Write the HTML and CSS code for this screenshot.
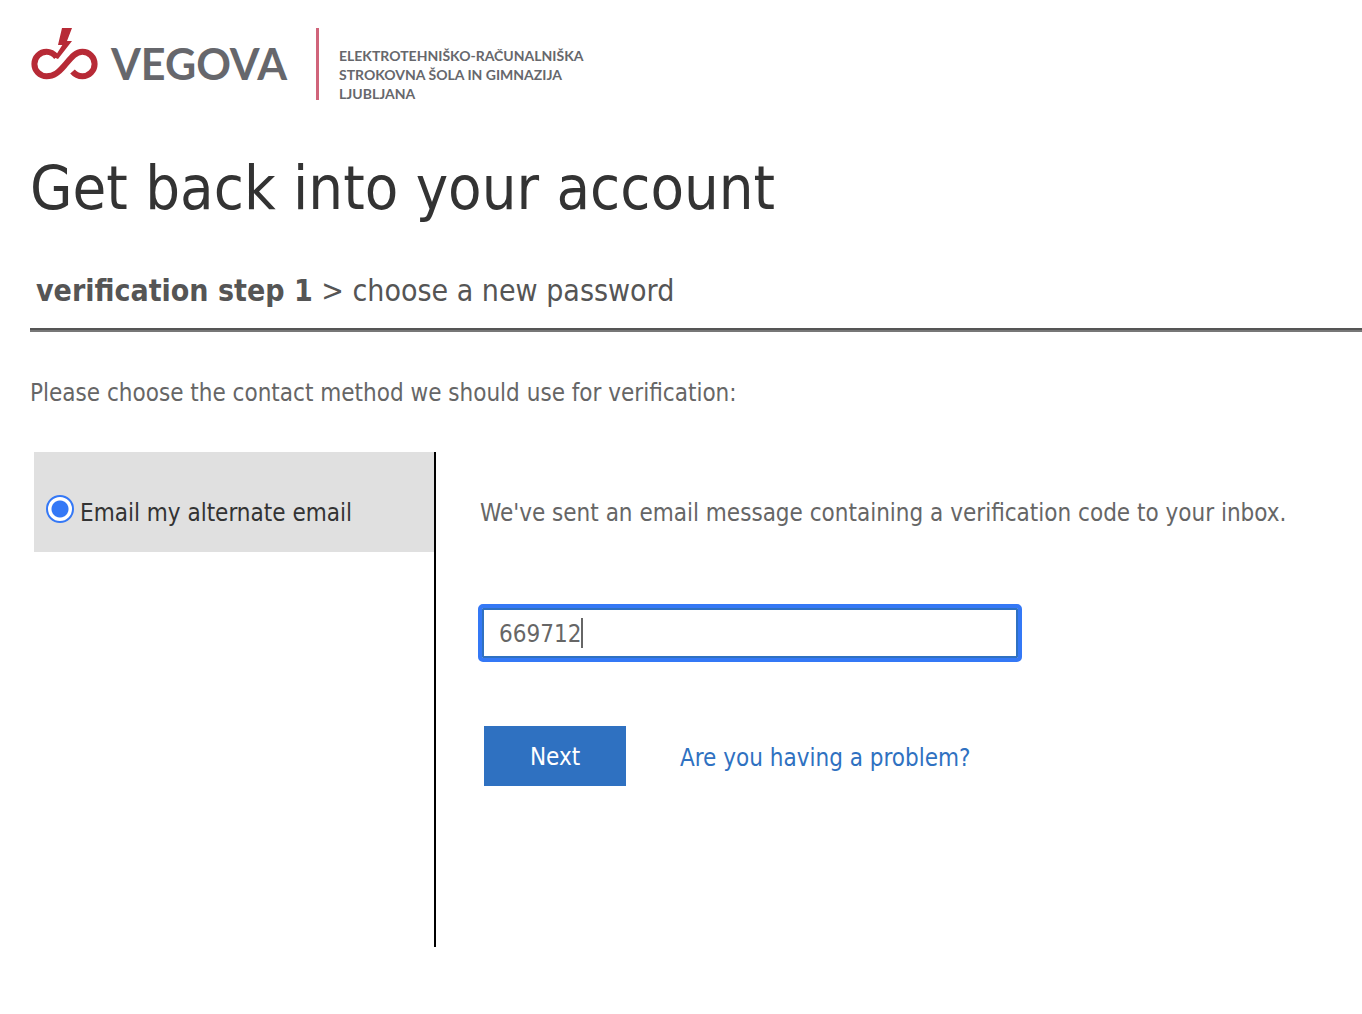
FILE: index.html
```html
<!doctype html>
<html lang="en">
<head>
    <meta charset="utf-8">
    <meta name="viewport" content="width=device-width, initial-scale=1">
    <title>Get back into your account</title>
    <link rel="stylesheet" href="styles.css">
</head>
<body>
    <header class="logo">
        <svg class="logo-mark" viewBox="0 0 70 56" aria-hidden="true">
            <path class="logo-loop" d="M26.500 31C23.500 27.500 20.500 25.800 16.600 25.800A12.200 12.200 0 0 0 16.600 50.200C24 50.200 28.500 46.500 34.500 39.500C40.500 32.500 45 25.800 52.400 25.800A12.200 12.200 0 0 1 52.400 50.200C48 50.200 45 48.500 42.500 45.500"/>
            <path class="logo-bolt" d="M32 2H42L37 15H42L28 33L24.500 31.500L32.300 19H28Z"/>
        </svg>
        <span class="logo-name">VEGOVA</span>
        <span class="logo-text">ELEKTROTEHNIŠKO-RAČUNALNIŠKA<br>STROKOVNA ŠOLA IN GIMNAZIJA<br>LJUBLJANA</span>
    </header>

    <main>
        <h1>Get back into your account</h1>
        <p class="steps"><strong>verification step 1</strong> &gt; choose a new password</p>
        <p class="intro">Please choose the contact method we should use for verification:</p>

        <form class="verify">
            <div class="methods">
                <label class="method">
                    <input type="radio" name="method" checked>
                    <span>Email my alternate email</span>
                </label>
            </div>
            <div class="details">
                <label class="message" for="code">We've sent an email message containing a verification code to your inbox.</label>
                <div class="code-field">
                    <input class="code" id="code" type="text" value="669712" autocomplete="off">
                </div>
                <div class="actions">
                    <button type="submit">Next</button>
                    <a href="#">Are you having a problem?</a>
                </div>
            </div>
        </form>
    </main>
</body>
</html>
```
FILE: styles.css
```css
* {
    box-sizing: border-box;
}
body {
    margin: 0;
    padding: 26px 0 64px 30px;
    background-color: #fff;
    color: #666;
    font-family: Tahoma, "DejaVu Sans Condensed", "DejaVu Sans", sans-serif;
    font-size: 24px;
    line-height: 32px;
}
h1, p {
    margin: 0;
}

/* Logo */
.logo {
    display: flex;
    align-items: flex-start;
    font-family: Lato, sans-serif;
}
.logo-mark {
    flex: none;
    width: 70px;
    height: 56px;
}
.logo-loop {
    fill: none;
    stroke: #b72a36;
    stroke-width: 6;
}
.logo-bolt {
    fill: #b72a36;
}
.logo-name {
    width: 216px;
    padding: 14px 0 0 11px;
    color: #66676c;
    font-size: 43px;
    font-weight: 700;
    line-height: 48px;
}
.logo-text {
    height: 72px;
    margin-top: 2px;
    padding: 18px 0 0 20px;
    border-left: 3px solid #d0647a;
    color: #66676c;
    font-size: 14px;
    font-weight: 700;
    line-height: 19px;
}

h1 {
    margin-top: 48px;
    color: #333;
    font-size: 61px;
    font-weight: 400;
    line-height: 80px;
}
.steps {
    margin-top: 43px;
    padding: 0 6px 17px;
    border-bottom: 2px solid #555;
    box-shadow: 0 2px 0 #777;
    color: #555;
    font-size: 30px;
    line-height: 40px;
}
.intro {
    margin-top: 47px;
}

/* Contact method and code */
.verify {
    display: flex;
    margin: 43px 0 0 4px;
}
.methods {
    flex: none;
    width: 402px;
    min-height: 495px;
    border-right: 2px solid #000;
}
.method {
    display: flex;
    gap: 6px;
    padding: 43px 12px 21px;
    background-color: #e0e0e0;
    color: #333;
    line-height: 36px;
}
.method input {
    appearance: none;
    flex: none;
    width: 28px;
    height: 28px;
    margin: 0;
    border: 2px solid #3478f6;
    border-radius: 50%;
    background: radial-gradient(circle, #3478f6 8px, #fff 9px);
}
.details {
    flex: 1;
    padding: 43px 20px 0 44px;
}
.message {
    display: block;
    line-height: 36px;
}
.code-field {
    position: relative;
    max-width: 536px;
    margin: 77px 0 0 2px;
}
/* Text cursor */
.code-field::after {
    content: "";
    position: absolute;
    top: 10px;
    left: 99px;
    width: 2px;
    height: 30px;
    background-color: #666;
}
.code {
    display: block;
    width: 100%;
    height: 50px;
    padding: 2px 16px 0 15px;
    border: 2px solid #2f71c1;
    border-radius: 1px;
    outline: 4px solid #3478f6;
    background-color: #fff;
    color: #666;
    font: inherit;
}
.actions {
    display: flex;
    align-items: center;
    gap: 54px;
    margin: 68px 0 0 4px;
}
button {
    width: 142px;
    height: 60px;
    padding: 2px 0 0;
    border: none;
    background-color: #2f71c1;
    color: #fff;
    font: inherit;
    cursor: pointer;
}
a {
    padding-top: 4px;
    color: #2f71c1;
    text-decoration: none;
}
```
